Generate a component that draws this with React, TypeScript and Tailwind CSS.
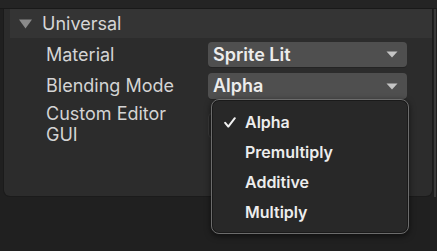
import React from 'react';

const Caret = () => (
  <svg width="12" height="7" viewBox="0 0 12 7" className="shrink-0">
    <path d="M0.5 0.5 H11.5 L6 6.5 Z" fill="#c4c4c4" />
  </svg>
);

const Field = ({ label }: { label: string }) => (
  <div className="flex h-full w-full items-center justify-between rounded-[4px] bg-[#4f4f4f] pl-[5px] pr-[9px] shadow-[0_1px_0_#242424]">
    <span className="text-[18px] font-semibold leading-none text-[#ececec]">{label}</span>
    <Caret />
  </div>
);

const menuItems = ['Alpha', 'Premultiply', 'Additive', 'Multiply'];

export default function App() {
  return (
    <div
      className="relative h-[251px] w-[437px] overflow-hidden bg-[#202020]"
      style={{ fontFamily: 'Inter, "Noto Sans", sans-serif' }}
    >
      <div className="h-[9px] border-b border-[#191919] bg-[#242424]" />
      <div className="flex">
        <div className="ml-[3px] h-[188px] w-[430px] rounded-b-[7px] border-x border-b border-[#1b1b1b] bg-[#2c2c2c]">
          <div className="ml-[6px] flex h-[29px] items-center bg-[#343434]">
            <svg width="13" height="10" viewBox="0 0 13 10" className="ml-[9px]">
              <path d="M0 0.5 H13 L6.5 9.5 Z" fill="#8a8a8a" />
            </svg>
            <span className="ml-[10px] text-[18px] leading-none text-[#d6d6d6]">Universal</span>
          </div>

          <div className="mt-[4px] flex flex-col gap-[6px] pl-[42px] pr-[25px]">
            <div className="flex h-[25px] items-center justify-between">
              <span className="text-[18px] leading-none text-[#d4d4d4]">Material</span>
              <div className="h-[25px] w-[199px]">
                <Field label="Sprite Lit" />
              </div>
            </div>
            <div className="flex h-[26px] items-center justify-between">
              <span className="text-[18px] leading-none text-[#d4d4d4]">Blending Mode</span>
              <div className="h-[26px] w-[199px]">
                <Field label="Alpha" />
              </div>
            </div>
            <div className="flex items-start justify-between">
              <span className="-mt-[2px] text-[18px] leading-[21px] text-[#d4d4d4]">
                Custom Editor
                <br />
                GUI
              </span>
              <div className="mt-[8px] h-[25px] w-[199px] rounded-[4px] border border-[#3a3a3a] bg-[#262626]" />
            </div>
          </div>
        </div>
        <div className="ml-[1px] h-[188px] w-[2px] bg-[#3a3a3a]" />
      </div>

      {/* open dropdown */}
      <div className="absolute left-[211px] top-[99px] w-[198px] rounded-[8px] border border-[#6c6c6c] bg-[#282828] pb-[6px] pt-[7px] shadow-[0_2px_6px_rgba(0,0,0,0.6),inset_0_0_0_1px_#1a1a1a]">
        {menuItems.map((item, i) => (
          <div key={item} className="flex h-[30px] items-center">
            <span className="flex w-[33px] justify-end pr-[9px]">
              {i === 0 && (
                <svg width="12" height="11" viewBox="0 0 12 11">
                  <path d="M1.2 5.8 L4.3 9.6 L10.8 1.2" fill="none" stroke="#f2f2f2" strokeWidth="2" strokeLinecap="round" strokeLinejoin="round" />
                </svg>
              )}
            </span>
            <span className="text-[16px] font-semibold leading-none text-[#ededed]">{item}</span>
          </div>
        ))}
      </div>
    </div>
  );
}
